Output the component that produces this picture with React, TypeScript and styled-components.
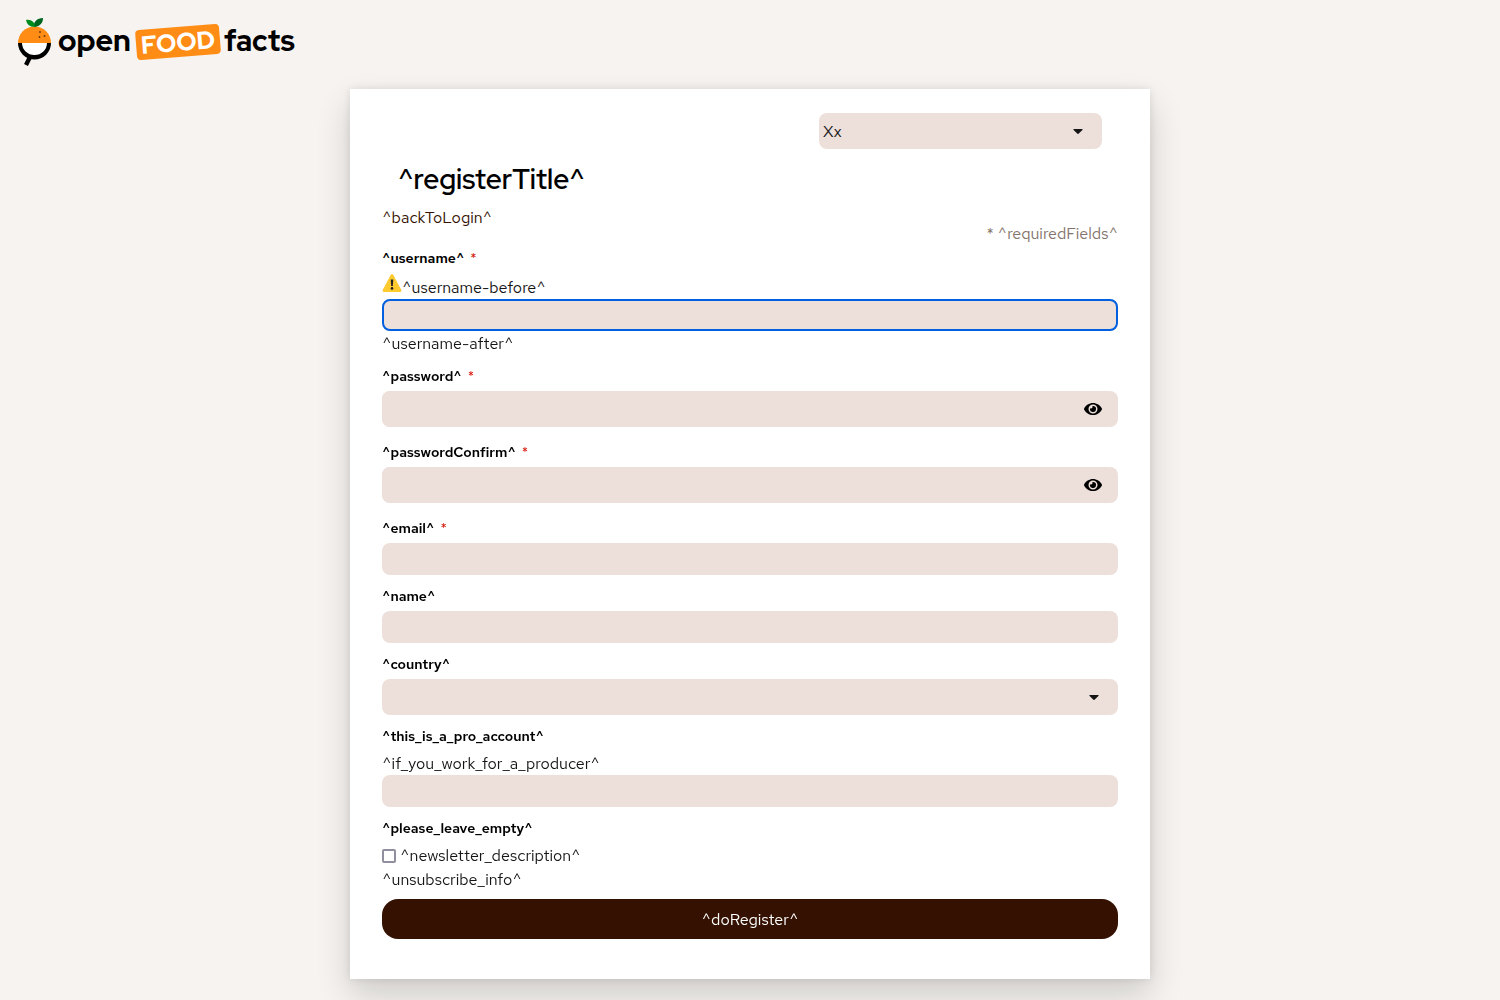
import React from "react";
import styled, { createGlobalStyle } from "styled-components";

const font = `"Red Hat Text", Inter, "Open Sans", sans-serif`;
const displayFont = `"Red Hat Display", "Red Hat Text", Inter, sans-serif`;

const GlobalStyle = createGlobalStyle`
  *, *::before, *::after { box-sizing: border-box; }
  body {
    margin: 0;
    background: #f6f3f0;
    color: #151515;
    font: 400 16px/26px ${font};
  }
`;

const Header = styled.header`
  display: flex;
  height: 89px;
  padding: 18px 16px 0;
`;

const Brand = styled.a`
  display: block;
  height: 50px;
`;

const Card = styled.main`
  max-width: 800px;
  margin: 0 auto 40px;
  padding: 24px 32px 40px;
  background: #fff;
  box-shadow: 0 16px 32px rgba(3, 3, 3, 0.16), 0 0 8px rgba(3, 3, 3, 0.1);
`;

const LocaleBar = styled.div`
  display: flex;
  justify-content: flex-end;
  padding: 0 16px;
`;

const SelectWrap = styled.div<{ $compact?: boolean }>`
  display: grid;
  align-items: center;
  width: ${(p) => (p.$compact ? "283px" : "100%")};

  > * { grid-area: 1 / 1; }
  > svg {
    justify-self: end;
    margin-right: 19px;
    pointer-events: none;
  }
`;

const Select = styled.select`
  appearance: none;
  width: 100%;
  height: 36px;
  padding: 2px 40px 0 4px;
  border: 0;
  border-radius: 8px;
  background: #ede0db;
  color: #151515;
  font: inherit;
`;

const Title = styled.h1`
  margin: 12px 0 8px;
  padding: 0 16px;
  color: #000;
  font-family: ${displayFont};
  font-size: 28px;
  font-weight: 600;
  line-height: 36px;
`;

const Intro = styled.div`
  display: flex;
  justify-content: space-between;
  align-items: flex-start;
  height: 32px;
`;

const BackLink = styled.a`
  color: #341100;
  text-decoration: none;
`;

const Required = styled.span`
  padding-top: 16px;
  color: #85746c;
`;

const Form = styled.form`
  display: flex;
  flex-direction: column;
`;

const Label = styled.label`
  padding: 9px 0 3px;
  color: #000;
  font-size: 14px;
  font-weight: 600;
  line-height: 24px;
`;

const Star = styled.span`
  margin-left: 6px;
  color: #d5190b;
  font-weight: 400;
`;

const Help = styled.p<{ $icon?: boolean }>`
  display: flex;
  align-items: flex-start;
  height: ${(p) => (p.$icon ? "26px" : "24px")};
  margin: 0;
  line-height: ${(p) => (p.$icon ? "30px" : "26px")};
`;

const Input = styled.input`
  width: 100%;
  height: 32px;
  padding: 0 8px;
  border: 0;
  border-radius: 8px;
  background: #ede0db;
  color: #151515;
  font: inherit;

  &:focus { outline: 2px solid #0060df; outline-offset: -2px; }
`;

const PasswordBox = styled.div`
  display: flex;
  height: 36px;
  margin-bottom: 4px;
  border-radius: 8px;
  background: #ede0db;

  input { height: 36px; flex: 1; }
`;

const EyeButton = styled.button`
  display: grid;
  place-items: center;
  width: 50px;
  padding: 0;
  border: 0;
  background: transparent;
  color: #000;
`;

const CheckRow = styled.div`
  display: flex;
  align-items: center;
  gap: 4px;
  height: 24px;
  padding-top: 2px;
`;

const Check = styled.input`
  appearance: none;
  width: 14px;
  height: 14px;
  margin: 0;
  border: 2px solid #8f8f9d;
  border-radius: 2px;
  background: #fff;

  &:checked { background: #341100; }
`;

const Submit = styled.button`
  height: 40px;
  margin-top: 8px;
  padding: 2px 16px 0;
  border: 0;
  border-radius: 16px;
  background: #341100;
  color: #fff;
  font: inherit;
`;

const Logo = () => (
  <svg width="300" height="50" viewBox="16 18 300 50" role="img" aria-label="open food facts">
    <path d="M31 55 L26 65" stroke="#000" strokeWidth="4.4" />
    <path d="M18 43 a16.5 16.5 0 0 0 33 0z" fill="#000" />
    <path d="M22 43 a12.5 12 0 0 0 25 0z" fill="#fff" />
    <path d="M18 43 a16.5 16.5 0 0 1 33 0z" fill="#ff8c14" />
    <path d="M34 27 C33 22 37 18 43 18 C43 23 40 26 35 27z" fill="#00661f" />
    <path d="M35 27 C29 27 27 24 26 20 C31 19 35 22 35 27z" fill="#008c1d" />
    <g fill="#6b3410">
      <circle cx="40" cy="32" r="0.9" />
      <circle cx="44.5" cy="36" r="0.9" />
      <circle cx="39.5" cy="37" r="0.9" />
    </g>
    <rect x="136" y="27" width="84" height="30" rx="4" fill="#ff8c14" transform="rotate(-4.6 178 42)" />
    <g fontFamily={displayFont} fontWeight="800">
      <text x="58" y="51" fontSize="30">open</text>
      <text x="141" y="51" fontSize="25" fill="#fff" transform="rotate(-4.6 178 42)">FOOD</text>
      <text x="224" y="51" fontSize="29">facts</text>
    </g>
  </svg>
);

const Caret = () => (
  <svg width="10" height="8" viewBox="0 -2 10 8" aria-hidden="true">
    <path d="M1 0h8c.5 0 .8.6.4 1L5.5 4.7a.7.7 0 0 1-1 0L.6 1C.2.6.5 0 1 0z" fill="#151515" />
  </svg>
);

const Warning = () => (
  <svg width="20" height="20" viewBox="0 0 20 20" aria-hidden="true">
    <path d="M8.8 1.8a1.4 1.4 0 0 1 2.4 0l8 15a1.4 1.4 0 0 1-1.2 2.2H2a1.4 1.4 0 0 1-1.2-2.2z" fill="#fdcb2f" />
    <path d="M8.7 6.4h2.6L10.8 13H9.2z" fill="#222" />
    <circle cx="10" cy="15.4" r="1.3" fill="#222" />
  </svg>
);

const Eye = () => (
  <svg width="18" height="16" viewBox="0 0 576 512" aria-hidden="true">
    <path
      fill="currentColor"
      d="M572.52 241.4C518.29 135.59 410.93 64 288 64S57.68 135.64 3.48 241.41a32.35 32.35 0 0 0 0 29.19C57.71 376.41 165.07 448 288 448s230.32-71.64 284.52-177.41a32.35 32.35 0 0 0 0-29.19zM288 400a144 144 0 1 1 144-144 143.93 143.93 0 0 1-144 144zm0-240a95.31 95.31 0 0 0-25.31 3.79 47.85 47.85 0 0 1-66.9 66.9A95.78 95.78 0 1 0 288 160z"
    />
  </svg>
);

type FieldLabelProps = { id: string; text: string; required?: boolean };

const FieldLabel = ({ id, text, required }: FieldLabelProps) => (
  <Label htmlFor={id}>
    {text}
    {required && <Star>*</Star>}
  </Label>
);

const PasswordField = ({ id, text }: { id: string; text: string }) => {
  const [shown, setShown] = React.useState(false);
  return (
    <>
      <FieldLabel id={id} text={text} required />
      <PasswordBox>
        <Input id={id} type={shown ? "text" : "password"} />
        <EyeButton type="button" aria-label="Show password" onClick={() => setShown(!shown)}>
          <Eye />
        </EyeButton>
      </PasswordBox>
    </>
  );
};

export default function App() {
  return (
    <>
      <GlobalStyle />
      <Header>
        <Brand href="#"><Logo /></Brand>
      </Header>
      <Card>
        <LocaleBar>
          <SelectWrap $compact>
            <Select aria-label="Language"><option>Xx</option></Select>
            <Caret />
          </SelectWrap>
        </LocaleBar>
        <Title>^registerTitle^</Title>
        <Intro>
          <BackLink href="#">^backToLogin^</BackLink>
          <Required>* ^requiredFields^</Required>
        </Intro>
        <Form onSubmit={(e) => e.preventDefault()}>
          <FieldLabel id="username" text="^username^" required />
          <Help $icon><Warning />^username-before^</Help>
          <Input id="username" type="text" autoFocus />
          <Help>^username-after^</Help>
          <PasswordField id="password" text="^password^" />
          <PasswordField id="password-confirm" text="^passwordConfirm^" />
          <FieldLabel id="email" text="^email^" required />
          <Input id="email" type="email" />
          <FieldLabel id="name" text="^name^" />
          <Input id="name" type="text" />
          <FieldLabel id="country" text="^country^" />
          <SelectWrap>
            <Select id="country"><option></option></Select>
            <Caret />
          </SelectWrap>
          <FieldLabel id="pro" text="^this_is_a_pro_account^" />
          <Help>^if_you_work_for_a_producer^</Help>
          <Input id="pro" type="text" />
          <FieldLabel id="newsletter" text="^please_leave_empty^" />
          <CheckRow>
            <Check id="newsletter" type="checkbox" />
            <label htmlFor="newsletter">^newsletter_description^</label>
          </CheckRow>
          <Help>^unsubscribe_info^</Help>
          <Submit type="submit">^doRegister^</Submit>
        </Form>
      </Card>
    </>
  );
}
